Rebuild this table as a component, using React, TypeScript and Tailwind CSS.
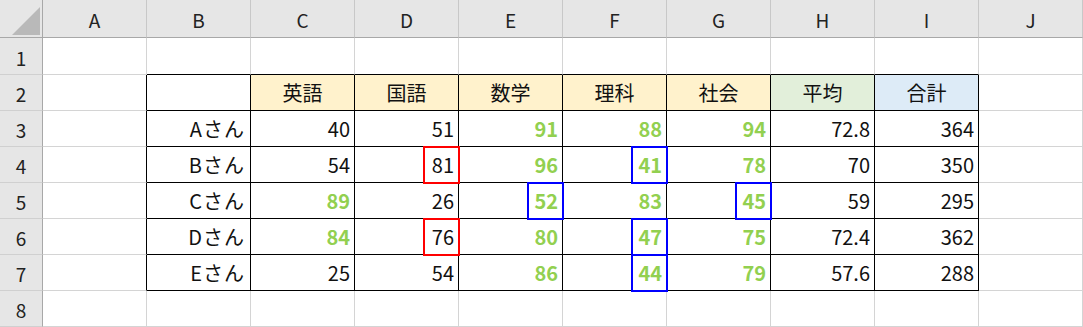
import React from "react";

const COLS = ["A", "B", "C", "D", "E", "F", "G", "H", "I", "J"];

type Mark = "red" | "blue" | undefined;
type Val = { v: string; g?: boolean; m?: Mark };

const SUBJECTS = [
  { label: "英語", bg: "bg-[#fff2cc]" },
  { label: "国語", bg: "bg-[#fff2cc]" },
  { label: "数学", bg: "bg-[#fff2cc]" },
  { label: "理科", bg: "bg-[#fff2cc]" },
  { label: "社会", bg: "bg-[#fff2cc]" },
  { label: "平均", bg: "bg-[#e2efda]" },
  { label: "合計", bg: "bg-[#ddebf7]" },
];

const DATA: { name: string; vals: Val[] }[] = [
  {
    name: "Aさん",
    vals: [{ v: "40" }, { v: "51" }, { v: "91", g: true }, { v: "88", g: true }, { v: "94", g: true }, { v: "72.8" }, { v: "364" }],
  },
  {
    name: "Bさん",
    vals: [{ v: "54" }, { v: "81", m: "red" }, { v: "96", g: true }, { v: "41", g: true, m: "blue" }, { v: "78", g: true }, { v: "70" }, { v: "350" }],
  },
  {
    name: "Cさん",
    vals: [{ v: "89", g: true }, { v: "26" }, { v: "52", g: true, m: "blue" }, { v: "83", g: true }, { v: "45", g: true, m: "blue" }, { v: "59" }, { v: "295" }],
  },
  {
    name: "Dさん",
    vals: [{ v: "84", g: true }, { v: "76", m: "red" }, { v: "80", g: true }, { v: "47", g: true, m: "blue" }, { v: "75", g: true }, { v: "72.4" }, { v: "362" }],
  },
  {
    name: "Eさん",
    vals: [{ v: "25" }, { v: "54" }, { v: "86", g: true }, { v: "44", g: true, m: "blue" }, { v: "79", g: true }, { v: "57.6" }, { v: "288" }],
  },
];

function Cell({ row, col }: { row: number; col: number }) {
  // col 0 = A ... 9 = J ; row 1..8
  const inTable = row >= 2 && row <= 7 && col >= 1 && col <= 8;
  const rBlack = inTable || (col === 0 && row >= 2 && row <= 7);
  const bBlack = inTable || (row === 1 && col >= 1 && col <= 8);
  let cls = `relative flex items-center border-r border-b ${rBlack ? "border-r-black" : "border-r-[#d4d4d4]"} ${
    bBlack ? "border-b-black" : "border-b-[#d4d4d4]"
  }`;

  let content: React.ReactNode = null;
  let mark: Mark;
  let bg = "bg-white";

  if (row === 2 && col >= 2 && col <= 8) {
    const s = SUBJECTS[col - 2];
    bg = s.bg;
    cls += " justify-center";
    content = <span>{s.label}</span>;
  } else if (row >= 3 && row <= 7 && col === 1) {
    cls += " justify-end pr-[5px]";
    content = <span className="tracking-[1px]">{DATA[row - 3].name}</span>;
  } else if (row >= 3 && row <= 7 && col >= 2 && col <= 8) {
    const d = DATA[row - 3].vals[col - 2];
    mark = d.m;
    cls += " justify-end pr-[4px]";
    content = <span className={d.g ? "font-bold text-[#92d050]" : ""}>{d.v}</span>;
  }

  return (
    <div className={`${cls} ${bg}`}>
      {content}
      {mark && (
        <div
          className={`absolute z-10 right-[-2px] top-[-1px] bottom-[-2px] w-[37px] border-2 ${
            mark === "red" ? "border-[#ff0000]" : "border-[#0000ff]"
          }`}
        />
      )}
    </div>
  );
}

export default function App() {
  return (
    <div
      className="w-[1083px] h-[327px] overflow-hidden bg-white text-[20px] text-[#111] leading-none"
      style={{ fontFamily: '"Noto Sans CJK JP", "Noto Sans", sans-serif' }}
    >
      <div className="grid grid-cols-[43px_repeat(10,104px)] grid-rows-[38px_37px_repeat(7,36px)]">
        {/* corner */}
        <div className="relative bg-[#e6e6e6] border-r border-b border-r-[#a8a8a8] border-b-[#a8a8a8]">
          <svg className="absolute left-[12px] top-[7px]" width="28" height="28" viewBox="0 0 28 28">
            <polygon points="28,0 28,28 0,28" fill="#b9b9b9" />
          </svg>
        </div>
        {COLS.map((c) => (
          <div
            key={c}
            className="flex items-center justify-center bg-[#e6e6e6] border-r border-b border-r-[#c8c8c8] border-b-[#a8a8a8] text-[19px] text-[#222] pt-[1px]"
          >
            {c}
          </div>
        ))}
        {Array.from({ length: 8 }, (_, i) => i + 1).map((row) => (
          <React.Fragment key={row}>
            <div className="flex items-center justify-center bg-[#e6e6e6] border-r border-b border-r-[#a8a8a8] border-b-[#d0d0d0] text-[19px] text-[#222] pt-[2px]">
              {row}
            </div>
            {COLS.map((_, col) => (
              <Cell key={col} row={row} col={col} />
            ))}
          </React.Fragment>
        ))}
      </div>
    </div>
  );
}
